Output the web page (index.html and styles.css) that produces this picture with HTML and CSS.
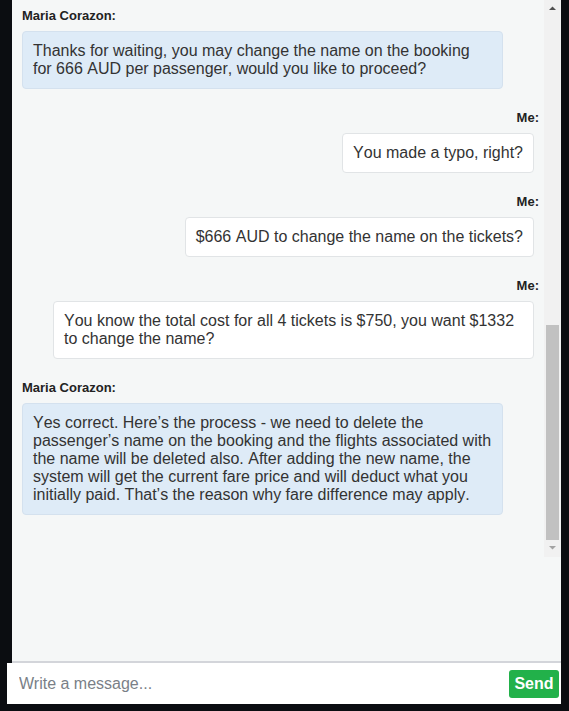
FILE: index.html
```html
<!DOCTYPE html>
<html lang="en">
<head>
<meta charset="utf-8">
<title>Chat</title>
<link rel="stylesheet" href="styles.css">
</head>
<body>
<div class="chat">
  <div class="chat-body">
    <div class="messages-pane">
      <div class="messages">
        <div class="thread">
          <div class="msg me">
            <div class="sender">Me:</div>
            <div class="bubble">Hi, I need to change a passenger name on my booking.</div>
          </div>
          <div class="msg agent">
            <div class="sender">Maria Corazon:</div>
            <div class="bubble">Hello! I’d be happy to help you with that. May I have your booking reference, please?</div>
          </div>
          <div class="msg me">
            <div class="sender">Me:</div>
            <div class="bubble">Sure, it’s QF7K2L.</div>
          </div>
          <div class="msg agent">
            <div class="sender">Maria Corazon:</div>
            <div class="bubble">Thank you. Which passenger’s name would you like to change?</div>
          </div>
          <div class="msg me">
            <div class="sender">Me:</div>
            <div class="bubble">The second passenger. My friend can no longer travel, so my brother will take her place.</div>
          </div>
          <div class="msg agent">
            <div class="sender">Maria Corazon:</div>
            <div class="bubble">I see. Please give me a moment while I check the fare rules for your ticket.</div>
          </div>
          <div class="msg me">
            <div class="sender">Me:</div>
            <div class="bubble">Okay, thank you.</div>
          </div>
          <div class="msg agent">
            <div class="sender">Maria Corazon:</div>
            <div class="bubble">Thanks for waiting, you may change the name on the booking for 666 AUD per passenger, would you like to proceed?</div>
          </div>
          <div class="msg me">
            <div class="sender">Me:</div>
            <div class="bubble">You made a typo, right?</div>
          </div>
          <div class="msg me">
            <div class="sender">Me:</div>
            <div class="bubble">$666 AUD to change the name on the tickets?</div>
          </div>
          <div class="msg me">
            <div class="sender">Me:</div>
            <div class="bubble">You know the total cost for all 4 tickets is $750, you want $1332 to change the name?</div>
          </div>
          <div class="msg agent">
            <div class="sender">Maria Corazon:</div>
            <div class="bubble">Yes correct. Here’s the process - we need to delete the passenger’s name on the booking and the flights associated with the name will be deleted also. After adding the new name, the system will get the current fare price and will deduct what you initially paid. That’s the reason why fare difference may apply.</div>
          </div>
        </div>
      </div>
      <div class="scrollbar" aria-hidden="true">
        <div class="sb-btn">
          <svg width="17" height="17" viewBox="0 0 17 17"><polygon points="5,10 12,10 8.5,6.5" fill="#505050"/></svg>
        </div>
        <div class="sb-track">
          <div class="sb-thumb"></div>
        </div>
        <div class="sb-btn">
          <svg width="17" height="17" viewBox="0 0 17 17"><polygon points="5,6 12,6 8.5,9.5" fill="#a3a3a3"/></svg>
        </div>
      </div>
    </div>
  </div>
  <form class="composer">
    <input class="composer-input" type="text" placeholder="Write a message..." autofocus>
    <button class="send-btn" type="button">Send</button>
  </form>
</div>
</body>
</html>
```
FILE: styles.css
```css
html, body {
  margin: 0;
  padding: 0;
}

body {
  background: #0b0d11;
  font-family: "Liberation Sans", Arial, sans-serif;
  color: #333;
  height: 711px;
  overflow: hidden;
}

.chat {
  width: 561px;
  height: 704px;
  display: flex;
  flex-direction: column;
}

.chat-body {
  flex: 1;
  margin-left: 12px;
  background: #f5f7f7;
  border-bottom: 2px solid #d3d5da;
}

.messages-pane {
  height: 557px;
  display: flex;
}

.messages {
  flex: 1;
  min-width: 0;
  overflow-y: scroll;
  scrollbar-width: none;
  display: flex;
  flex-direction: column-reverse;
}

.scrollbar {
  width: 17px;
  flex: none;
  background: #f1f1f1;
  display: flex;
  flex-direction: column;
}

.sb-btn {
  height: 17px;
  flex: none;
}

.sb-btn svg {
  display: block;
}

.sb-track {
  flex: 1;
  display: flex;
  flex-direction: column;
  justify-content: flex-end;
}

.sb-thumb {
  height: 215px;
  margin: 0 2px;
  background: #c1c1c1;
}

.thread {
  padding: 10px 5px 42px 10px;
}

.msg {
  display: flex;
  flex-direction: column;
  margin-bottom: 21px;
}

.msg:last-child {
  margin-bottom: 0;
}

.msg.agent {
  align-items: flex-start;
}

.msg.me {
  align-items: flex-end;
}

.sender {
  font-size: 13px;
  line-height: 15px;
  font-weight: bold;
  color: #222;
  margin-bottom: 8px;
}

.bubble {
  box-sizing: border-box;
  max-width: 481px;
  padding: 10px;
  border: 1px solid;
  border-radius: 4px;
  font-size: 16px;
  line-height: 18px;
  font-kerning: none;
  color: #333;
}

.msg.agent .bubble {
  background: #deebf7;
  border-color: #d4e1ee;
}

.msg.me .bubble {
  background: #fff;
  border-color: #e1e4e6;
  margin-right: 5px;
}

.composer {
  margin: 0 0 0 7px;
  height: 41px;
  background: #fff;
  display: flex;
  align-items: center;
  padding: 0 2px 0 10px;
}

.composer-input {
  flex: 1;
  border: none;
  outline: none;
  padding: 0 2px;
  margin: 0;
  background: transparent;
  font-family: "Liberation Sans", Arial, sans-serif;
  font-size: 16px;
  color: #333;
  height: 24px;
}

.composer-input::placeholder {
  color: #7a7f87;
}

.send-btn {
  width: 50px;
  height: 28px;
  padding: 0;
  border: none;
  border-radius: 3px;
  background: #22b14a;
  color: #fff;
  font-family: "Liberation Sans", Arial, sans-serif;
  font-size: 16px;
  font-weight: bold;
}
```
